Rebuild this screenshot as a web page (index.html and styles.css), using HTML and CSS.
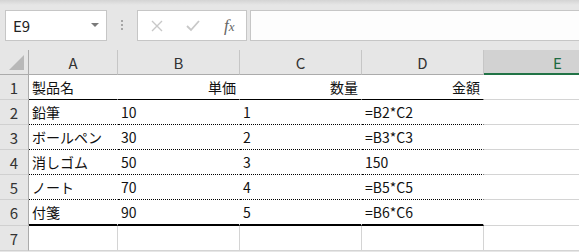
FILE: index.html
```html
<!DOCTYPE html>
<html lang="ja">
<head>
    <meta charset="UTF-8" />
    <title>Book1 - Excel</title>
    <link rel="stylesheet" href="styles.css">
</head>
<body>
    <div class="formula-bar">
        <div class="name-box">
            <span>E9</span>
            <svg class="caret" width="8" height="4" viewBox="0 0 8 4"><path d="M0 0 L8 0 L4 4 Z" fill="#7a7a7a"/></svg>
        </div>
        <div class="grip"><i></i><i></i><i></i></div>
        <div class="fx-buttons">
            <svg class="btn" width="12" height="12" viewBox="0 0 12 12"><path d="M1 1 L11 11 M11 1 L1 11" stroke="#c8c8c8" stroke-width="1.4" fill="none"/></svg>
            <svg class="btn" width="14" height="12" viewBox="0 0 14 12"><path d="M1 6 L5 10 L13 1" stroke="#c8c8c8" stroke-width="1.8" fill="none"/></svg>
            <span class="fx">f<small>x</small></span>
        </div>
        <div class="formula-input"></div>
    </div>

    <div class="sheet">
        <!-- 列見出し -->
        <div class="corner"><span class="tri"></span></div>
        <div class="col-hd">A</div>
        <div class="col-hd">B</div>
        <div class="col-hd">C</div>
        <div class="col-hd">D</div>
        <div class="col-hd sel">E</div>

        <div class="row-hd">1</div>
        <div class="cell solid">製品名</div>
        <div class="cell solid right">単価</div>
        <div class="cell solid right">数量</div>
        <div class="cell solid right">金額</div>
        <div class="cell"></div>

        <div class="row-hd">2</div>
        <div class="cell dot">鉛筆</div>
        <div class="cell dot">10</div>
        <div class="cell dot">1</div>
        <div class="cell dot">=B2*C2</div>
        <div class="cell"></div>

        <div class="row-hd">3</div>
        <div class="cell dot">ボールペン</div>
        <div class="cell dot">30</div>
        <div class="cell dot">2</div>
        <div class="cell dot">=B3*C3</div>
        <div class="cell"></div>

        <div class="row-hd">4</div>
        <div class="cell dot">消しゴム</div>
        <div class="cell dot">50</div>
        <div class="cell dot">3</div>
        <div class="cell dot">150</div>
        <div class="cell"></div>

        <div class="row-hd">5</div>
        <div class="cell dot">ノート</div>
        <div class="cell dot">70</div>
        <div class="cell dot">4</div>
        <div class="cell dot">=B5*C5</div>
        <div class="cell"></div>

        <div class="row-hd">6</div>
        <div class="cell thick">付箋</div>
        <div class="cell thick">90</div>
        <div class="cell thick">5</div>
        <div class="cell thick">=B6*C6</div>
        <div class="cell"></div>

        <div class="row-hd">7</div>
        <div class="cell"></div>
        <div class="cell"></div>
        <div class="cell"></div>
        <div class="cell"></div>
        <div class="cell"></div>
    </div>
</body>
</html>
```

FILE: styles.css
```css
body {
    margin: 0;
    width: 579px;
    height: 252px;
    overflow: hidden;
    background: #e6e6e6;
    font-family: "Noto Sans CJK JP", "Liberation Sans", sans-serif;
    color: #111;
}
.formula-bar {
    display: flex;
    height: 50px;
    padding: 10px 0 0 5px;
    box-sizing: border-box;
    background: linear-gradient(#d4d4d4, #e6e6e6 5px);
}
.name-box, .fx-buttons, .formula-input {
    height: 31px;
    box-sizing: border-box;
    background: #fff;
    border: 1px solid #c6c6c6;
}
.name-box {
    width: 102px;
    display: flex;
    align-items: center;
    justify-content: space-between;
    padding: 0 7px 0 7px;
    font-size: 15px;
    color: #222;
}
.caret {
    margin-top: -1px;
}
.grip {
    width: 30px;
    display: flex;
    flex-direction: column;
    align-items: center;
    padding-top: 10px;
    gap: 2px;
}
.grip i {
    width: 2px;
    height: 2px;
    background: #a6a6a6;
}
.fx-buttons {
    width: 110px;
    display: flex;
    align-items: center;
    padding-left: 13px;
    gap: 23px;
}
.fx {
    font-family: "Liberation Serif", serif;
    font-style: italic;
    font-size: 17px;
    color: #666;
    margin-left: 1px;
}
.fx small {
    font-size: 13px;
}
.formula-input {
    flex: 1;
    margin-left: 3px;
    border-right: none;
    background: #fdfdfd;
}

.sheet {
    display: grid;
    grid-template-columns: 29px 89px 122px 122px 122px 95px;
    grid-template-rows: 25px 25px 25px 25px 25px 25px 26px 25px;
    font-size: 14px;
}
.sheet > div {
    box-sizing: border-box;
    display: flex;
    align-items: center;
    white-space: nowrap;
}
.corner {
    position: relative;
    border-right: 1px solid #ababab;
    border-bottom: 1px solid #ababab;
}
.tri {
    position: absolute;
    right: 4px;
    bottom: 4px;
    width: 15px;
    height: 15px;
    background: #b8b8b8;
    clip-path: polygon(100% 0, 100% 100%, 0 100%);
}
.col-hd {
    justify-content: center;
    border-right: 1px solid #c6c6c6;
    border-bottom: 1px solid #ababab;
    color: #333;
    font-size: 15px;
    padding-top: 1px;
}
.col-hd.sel {
    justify-content: flex-start;
    padding-left: 69px;
    background: #d2d2d2;
    border-bottom: 2px solid #217346;
    color: #1e6b41;
    border-right: none;
}
.row-hd {
    justify-content: center;
    border-right: 1px solid #ababab;
    border-bottom: 1px solid #d0d0d0;
    color: #333;
    font-size: 15px;
}
.cell {
    background: #fff;
    padding: 0 3px;
    border-right: 1px solid #d4d4d4;
    border-bottom: 1px solid #d4d4d4;
}
.cell:nth-child(6n) {
    border-right: none;
}
.cell.right {
    justify-content: flex-end;
}
.cell.solid, .cell.dot, .cell.thick {
    border-right-color: #fff;
}
.cell.solid {
    border-bottom: 1px solid #000;
}
.cell.dot {
    border-bottom: 1px dotted #000;
}
.cell.thick {
    border-bottom: 2px solid #000;
}
```
